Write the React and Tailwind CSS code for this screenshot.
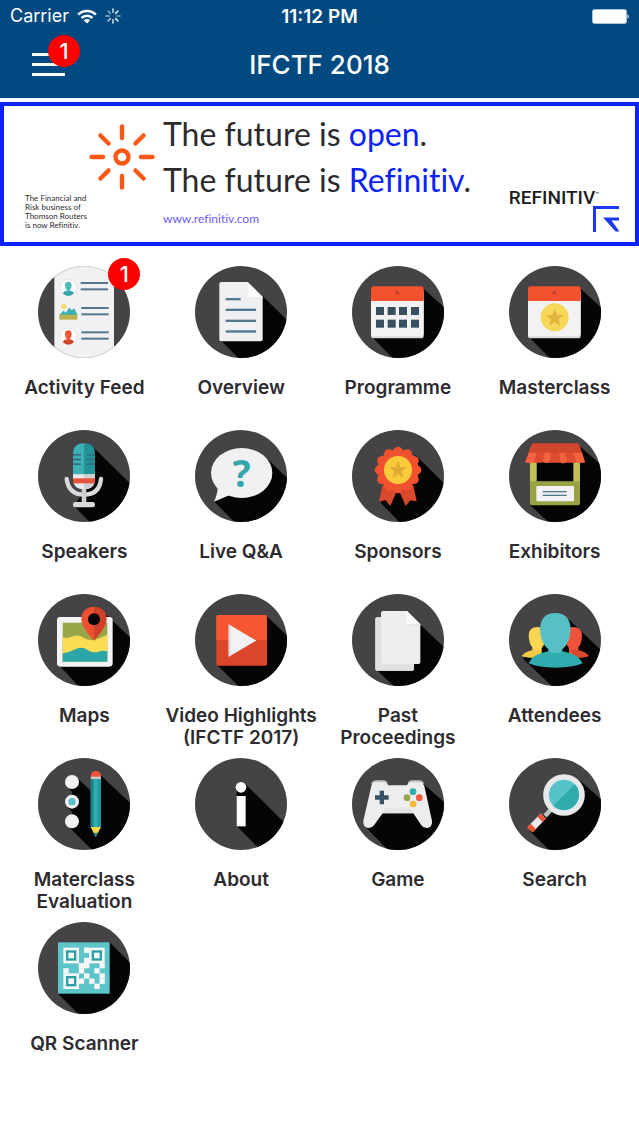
import React from 'react';

const STAR = 'M0 -28 L7 -9 L27 -9 L11 4 L17 24 L0 12 L-17 24 L-11 4 L-27 -9 L-7 -9 Z';

// Dark disc with a long shadow that falls to the bottom right
function Disc({ shadow, children }) {
  return (
    <svg viewBox="0 0 276 276" className="size-[92px] rounded-full bg-[#454346]" aria-hidden="true">
      {shadow && <polygon points={shadow} fill="#050505" />}
      {children}
    </svg>
  );
}

function Avatar({ x, y, light, dark }) {
  return (
    <g transform={`translate(${x} ${y})`}>
      <circle r="25" fill="#fff" stroke="#dcdcdf" strokeWidth="2" />
      <path d="M-17 17 Q-14 10 -4 9 H4 Q14 10 17 17 Q9 25 0 25 Q-9 25 -17 17 Z" fill={dark} />
      <path d="M-10 -8 Q-9 -18 0 -18 Q9 -18 10 -8 Q10 2 5 7 V12 Q0 16 -5 12 V7 Q-10 2 -10 -8 Z" fill={light} />
    </g>
  );
}

function ActivityIcon() {
  return (
    <Disc>
      <path d="M49 0 H228 V276 H49 Z" fill="#f1f1f3" />
      <path d="M49 33 A138 138 0 0 1 228 33 M49 243 A138 138 0 0 0 228 243" fill="none" stroke="#d6d6d9" strokeWidth="4" />
      <Avatar x={91} y={65} light="#4bbcc0" dark="#2fa3a6" />
      <Avatar x={91} y={211} light="#f0563a" dark="#cf4429" />
      <circle cx="78" cy="121" r="8" fill="#f8dc6a" />
      <path d="M65 146 L76 134 L84 140 L93 125 L102 133 L108 126 L118 146 V150 H65 Z" fill="#36aeb2" />
      <rect x="64" y="146" width="54" height="15" fill="#bdb052" />
      <g fill="#51788f">
        <rect x="128" y="48" width="82" height="6" />
        <rect x="128" y="67" width="82" height="6" />
        <rect x="130" y="123" width="82" height="6" />
        <rect x="130" y="142" width="82" height="6" />
        <rect x="130" y="196" width="82" height="6" />
        <rect x="130" y="215" width="82" height="6" />
      </g>
    </Disc>
  );
}

function OverviewIcon() {
  return (
    <Disc shadow="203,90 276,162 276,276 130,276 80,226">
      <path d="M79 48 H158 L203 93 V220 Q203 226 197 226 H79 Q73 226 73 220 V54 Q73 48 79 48 Z" fill="#f0f0f3" />
      <path d="M158 48 L203 93 V97 H158 Z" fill="#fbfbfc" />
      <path d="M158 97 H203" stroke="#dddde0" strokeWidth="2" />
      <g fill="#51788f">
        <rect x="92" y="96" width="45" height="7" />
        <rect x="92" y="128" width="91" height="7" />
        <rect x="92" y="161" width="91" height="7" />
        <rect x="92" y="193" width="91" height="7" />
      </g>
    </Disc>
  );
}

function CalendarIcon({ children }) {
  return (
    <Disc shadow="212,66 276,124 276,276 122,276 62,215">
      <rect x="57" y="70" width="158" height="147" rx="8" fill="#d9dadd" />
      <path d="M57 100 H215 V204 Q215 211 208 211 H64 Q57 211 57 204 Z" fill="#f2f2f5" />
      <path d="M57 105 V69 Q57 61 65 61 H207 Q215 61 215 69 V105 Z" fill="#f4512f" />
      <circle cx="136" cy="80" r="5" fill="#b8402a" />
      {children}
    </Disc>
  );
}

function ProgrammeIcon() {
  return (
    <CalendarIcon>
      {[72, 107, 141, 177].map(x => (
        <g key={x} fill="#36505f">
          <rect x={x} y="123" width="24" height="24" />
          <rect x={x} y="161" width="24" height="24" />
        </g>
      ))}
    </CalendarIcon>
  );
}

function MasterclassIcon() {
  return (
    <CalendarIcon>
      <circle cx="137" cy="154" r="42" fill="#f6d758" />
      <path d={STAR} transform="translate(137 156)" fill="#dfb540" />
    </CalendarIcon>
  );
}

function SpeakersIcon() {
  return (
    <Disc shadow="164,50 276,160 276,276 155,276 108,228 140,180">
      <path d="M105 73 Q105 40 138 40 V178 Q105 178 105 145 Z" fill="#3cb0b4" />
      <path d="M138 40 Q171 40 171 73 V145 Q171 178 138 178 Z" fill="#239296" />
      <path d="M105 133 H171 V145 Q171 178 138 178 Q105 178 105 145 Z" fill="#e9e9eb" />
      <path d="M138 133 H171 V145 Q171 178 138 178 Z" fill="#cfcfd2" />
      <rect x="105" y="145" width="66" height="15" fill="#e5543a" />
      <g fill="#336a86">
        <rect x="105" y="72" width="24" height="5" />
        <rect x="105" y="86" width="24" height="5" />
        <rect x="105" y="100" width="24" height="5" />
        <rect x="147" y="72" width="24" height="5" />
        <rect x="147" y="86" width="24" height="5" />
        <rect x="147" y="100" width="24" height="5" />
      </g>
      <path d="M86 147 C90 178 108 194 138 194 C168 194 186 178 189 147" fill="none" stroke="#dadadd" strokeWidth="13" strokeLinecap="round" />
      <rect x="131" y="176" width="14" height="44" fill="#cfcfd2" />
      <rect x="105" y="216" width="66" height="16" rx="7" fill="#dadadd" />
    </Disc>
  );
}

function QuestionIcon() {
  return (
    <Disc shadow="215,85 276,143 276,276 118,276 57,214">
      <ellipse cx="140" cy="129" rx="92" ry="75" fill="#f1f1f4" />
      <path d="M68 172 Q68 192 57 215 L106 194 Z" fill="#f1f1f4" />
      <text x="140" y="170" textAnchor="middle" fill="#32a8ac" className="font-['Noto_Sans',sans-serif] text-[114px] font-bold">?</text>
    </Disc>
  );
}

function SponsorsIcon() {
  return (
    <Disc shadow="190,75 276,160 276,276 142,276 86,218">
      <path d="M92 165 L81 214 L101 211 L115 228 L138 175 Z" fill="#d9472c" />
      <path d="M184 165 L194 214 L175 211 L161 228 L138 175 Z" fill="#d9472c" />
      <circle cx="138" cy="120" r="62" fill="#f0512f" />
      {Array.from({ length: 12 }, (_, i) => (
        <circle key={i} cx="138" cy="64" r="14" fill="#f0512f" transform={`rotate(${i * 30} 138 120)`} />
      ))}
      <circle cx="138" cy="120" r="42" fill="#fccb3c" />
      <path d={STAR} transform="translate(138 120)" fill="#deaa34" />
    </Disc>
  );
}

function ExhibitorsIcon() {
  return (
    <Disc shadow="211,48 276,104 276,276 118,276 63,225">
      <rect x="83" y="90" width="110" height="66" fill="#050505" />
      <rect x="63" y="90" width="20" height="66" fill="#c1bf55" />
      <rect x="193" y="90" width="20" height="66" fill="#c1bf55" />
      <path d="M63 154 H213 V220 Q213 226 207 226 H69 Q63 226 63 220 Z" fill="#9aa344" />
      <rect x="82" y="168" width="113" height="46" rx="4" fill="#f2f2f5" />
      <rect x="101" y="183" width="72" height="4" fill="#51788f" />
      <rect x="101" y="194" width="72" height="4" fill="#51788f" />
      <path d="M74 40 H204 Q211 40 212 47 L228 97 Q214 102 202 96 H74 Q62 102 48 97 L66 47 Q68 40 74 40 Z" fill="#d3452c" />
      <path d="M60 68 H84 L76 96 Q62 102 48 97 Z M108 68 H126 L122 98 Q111 101 100 96 Z M150 68 H168 L176 97 Q164 102 154 98 Z M192 68 H219 L228 97 Q214 102 202 96 Z" fill="#f4623f" />
      <path d="M74 98 L84 68 H108 L100 98 Z M122 98 L126 68 H150 L154 98 Z M176 98 L168 68 H192 L202 98 Z" fill="#df4c31" />
    </Disc>
  );
}

function MapsIcon() {
  return (
    <Disc shadow="205,62 276,130 276,276 122,276 64,215">
      <rect x="57" y="69" width="167" height="149" rx="10" fill="#f3f3f5" />
      <rect x="74" y="86" width="134" height="117" fill="#98a548" />
      <path d="M74 130 Q90 135 106 126 Q122 122 138 132 Q152 140 168 138 Q188 132 208 122 V203 H74 Z" fill="#fbdc54" />
      <path d="M74 178 Q94 176 112 166 Q126 158 142 164 Q162 178 180 174 Q194 168 208 172 V203 H74 Z" fill="#2ba5a8" />
      <path d="M168 38 Q130 40 130 78 Q132 102 168 140 Z" fill="#ee4f31" />
      <path d="M168 38 Q206 40 206 78 Q204 102 168 140 Z" fill="#cf4229" />
      <circle cx="168" cy="76" r="18" fill="#050505" />
    </Disc>
  );
}

function VideoIcon() {
  return (
    <Disc shadow="214,66 276,124 276,276 130,276 66,213">
      <rect x="64" y="63" width="152" height="152" rx="5" fill="#dc472b" />
      <path d="M64 139 V68 Q64 63 69 63 H211 Q216 63 216 68 V139 Z" fill="#f65632" />
      <path d="M101 91 L184 140 L101 188 Z" fill="#f2f2f4" />
      <path d="M101 91 L107 95 V184 L101 188 Z" fill="#ddd" />
    </Disc>
  );
}

function PastIcon() {
  return (
    <Disc shadow="203,90 276,160 276,276 125,276 74,228">
      <rect x="70" y="70" width="116" height="160" rx="6" fill="#dcdcdf" />
      <path d="M70 76 Q70 70 76 70 H87 V210 H186 V224 Q186 230 180 230 H76 Q70 230 70 224 Z" fill="#e1e1e4" />
      <path d="M93 51 H165 L205 91 V204 Q205 210 199 210 H93 Q87 210 87 204 V57 Q87 51 93 51 Z" fill="#eeeef1" />
      <path d="M165 51 L205 91 V93 H163 V51 Z" fill="#fafafb" />
      <path d="M163 93 H205" stroke="#dadade" strokeWidth="3" />
    </Disc>
  );
}

function AttendeesIcon() {
  return (
    <Disc shadow="178,75 276,168 276,276 128,276 42,194 90,150">
      <path d="M59 124 Q60 99 86 99 Q108 99 110 128 Q108 152 98 162 V190 H54 Q44 188 39 186 Q46 176 70 169 V160 Q60 150 59 124 Z" fill="#f9d654" />
      <path d="M39 186 Q46 174 72 168 H98 L80 192 Q56 192 39 186 Z" fill="#f3c945" />
      <path d="M219 124 Q218 99 192 99 Q170 99 168 128 Q170 152 180 162 V190 H224 Q234 188 239 186 Q232 176 208 169 V160 Q218 150 219 124 Z" fill="#f0533a" />
      <path d="M239 186 Q232 174 206 168 H184 L198 192 Q222 192 239 186 Z" fill="#dc4730" />
      <path d="M59 208 Q70 180 118 172 H160 Q208 180 221 208 Q190 221 140 221 Q90 221 59 208 Z" fill="#30acb0" />
      <path d="M93 105 Q95 57 139 57 Q183 57 185 105 Q183 148 160 166 V172 Q139 184 118 172 V166 Q95 148 93 105 Z" fill="#56c0c6" />
    </Disc>
  );
}

function EvaluationIcon() {
  return (
    <Disc shadow="118,60 158,98 158,45 184,48 276,134 276,276 162,276 90,204 102,190 102,162 88,146 102,130 102,102 90,88">
      <circle cx="102" cy="72" r="21" fill="#f3f3f5" />
      <circle cx="102" cy="131" r="21" fill="#f3f3f5" />
      <circle cx="102" cy="190" r="21" fill="#f3f3f5" />
      <circle cx="102" cy="131" r="11" fill="#54c2c8" />
      <path d="M158 58 V52 Q160 39 173 39 Q187 39 189 52 V58 Z" fill="#f0533a" />
      <rect x="158" y="56" width="31" height="9" fill="#c9cbcc" />
      <rect x="158" y="64" width="31" height="144" fill="#229a9c" />
      <rect x="158" y="64" width="9" height="144" fill="#188486" />
      <rect x="167" y="64" width="12" height="144" fill="#35adaf" />
      <path d="M158 207 H189 L173 237 Z" fill="#f5d94e" />
      <path d="M166 224 H180 L173 237 Z" fill="#1d8f91" />
    </Disc>
  );
}

function AboutIcon() {
  return (
    <Disc shadow="148,75 276,202 276,276 196,276 125,204 125,98">
      <circle cx="138" cy="88" r="16" fill="#fff" />
      <rect x="125" y="114" width="27" height="91" fill="#fff" />
    </Disc>
  );
}

function GameIcon() {
  return (
    <Disc shadow="210,74 276,132 276,276 108,276 40,206">
      <path d="M58 78 Q60 67 74 67 H96 Q106 68 107 80 Z M167 80 Q168 68 178 67 H200 Q214 68 216 78 Z" fill="#c4c4c7" />
      <path d="M58 84 Q60 73 74 73 H96 Q105 74 109 82 H165 Q169 74 178 73 H200 Q213 74 217 84 L240 188 Q242 206 226 210 Q214 211 208 202 L184 166 H92 L66 202 Q60 211 48 210 Q32 206 34 188 Z" fill="#ededf0" />
      <path d="M92 166 H184 L174 152 H102 Z" fill="#e2e2e5" />
      <path d="M83 98 H96 V112 H110 V125 H96 V139 H83 V125 H69 V112 H83 Z" fill="#365263" />
      <circle cx="183" cy="101" r="10" fill="#35adaf" />
      <circle cx="165" cy="119" r="10" fill="#99a548" />
      <circle cx="202" cy="119" r="10" fill="#f0593c" />
      <circle cx="183" cy="138" r="10" fill="#f6b93c" />
    </Disc>
  );
}

function SearchIcon() {
  return (
    <Disc shadow="210,65 276,124 276,276 120,276 62,218 120,150">
      <path d="M134 146 L108 174" stroke="#bfc1c3" strokeWidth="14" />
      <path d="M103 174 L64 214" stroke="#e9e9ec" strokeWidth="22" />
      <path d="M103 174 L93 184 M73 205 L62 216" stroke="#ec5335" strokeWidth="22" />
      <circle cx="165" cy="111" r="54" fill="#57c3c8" stroke="#e8e8ea" strokeWidth="17" />
      <path d="M132.500 143.500 A46 46 0 0 0 197.500 78.500 Z" fill="#2fabae" />
    </Disc>
  );
}

const QR_ROWS = [
  '....1...',
  '........',
  '....1...',
  '...11..1',
  '1..1..1.',
  '....1..1',
  '...1.1.1',
  '......1.',
];

function QrIcon() {
  return (
    <Disc shadow="215,61 276,122 276,276 121,276 60,215">
      <rect x="60" y="61" width="155" height="154" fill="#5dc5ca" />
      {QR_ROWS.map((row, r) =>
        row.split('').map((cell, c) =>
          cell === '1' ? <rect key={`${r}-${c}`} x={76 + c * 15.5} y={76.5 + r * 15.5} width="16" height="16" fill="#f5f7f7" /> : null
        )
      )}
      {[[76, 77], [153, 77], [76, 154]].map(([x, y]) => (
        <g key={`${x}-${y}`}>
          <rect x={x} y={y} width="47" height="47" fill="#f5f7f7" />
          <rect x={x + 8} y={y + 8} width="31" height="31" fill="#2b9fa2" />
          <rect x={x + 15} y={y + 15} width="17" height="17" fill="#f5f7f7" />
        </g>
      ))}
    </Disc>
  );
}

const tiles = [
  { label: 'Activity Feed', Icon: ActivityIcon, badge: 1 },
  { label: 'Overview', Icon: OverviewIcon },
  { label: 'Programme', Icon: ProgrammeIcon },
  { label: 'Masterclass', Icon: MasterclassIcon },
  { label: 'Speakers', Icon: SpeakersIcon },
  { label: 'Live Q&A', Icon: QuestionIcon },
  { label: 'Sponsors', Icon: SponsorsIcon },
  { label: 'Exhibitors', Icon: ExhibitorsIcon },
  { label: 'Maps', Icon: MapsIcon },
  { label: 'Video Highlights (IFCTF 2017)', Icon: VideoIcon },
  { label: 'Past Proceedings', Icon: PastIcon },
  { label: 'Attendees', Icon: AttendeesIcon },
  { label: 'Materclass Evaluation', Icon: EvaluationIcon },
  { label: 'About', Icon: AboutIcon },
  { label: 'Game', Icon: GameIcon },
  { label: 'Search', Icon: SearchIcon },
  { label: 'QR Scanner', Icon: QrIcon },
];

function Badge({ count }) {
  return (
    <span className="flex size-8 items-center justify-center rounded-full bg-[#fe0000] text-[22px] leading-none font-medium text-white">
      {count}
    </span>
  );
}

function StatusBar() {
  return (
    <div className="grid h-8 grid-cols-3 items-center px-2.5">
      <div className="flex items-center gap-2">
        <span className="text-lg leading-none">Carrier</span>
        <svg viewBox="0 0 20 15" className="h-[15px] w-5" fill="none" stroke="white" aria-hidden="true">
          <path d="M1.200 5.600 A12.500 12.500 0 0 1 18.800 5.600" strokeWidth="2.600" />
          <path d="M4.600 9 A7.700 7.700 0 0 1 15.400 9" strokeWidth="2.600" />
          <path d="M10 14.500 L6.800 11.200 A4.600 4.600 0 0 1 13.200 11.200 Z" fill="white" stroke="none" />
        </svg>
        <svg viewBox="-8 -8 16 16" className="size-4" stroke="white" strokeWidth="1.600" strokeLinecap="round" aria-hidden="true">
          {[0.8, 0.9, 0.5, 0.9, 0.8, 0.7, 0.6, 0.5].map((opacity, i) => (
            <path key={i} d="M0 -3.800 V-7" opacity={opacity} transform={`rotate(${i * 45})`} />
          ))}
        </svg>
      </div>
      <span className="text-center text-[19px] leading-none font-semibold">11:12 PM</span>
      <svg viewBox="0 0 38 15" className="h-[15px] w-[38px] justify-self-end" aria-hidden="true">
        <rect x="1.500" y="0.500" width="34" height="14" rx="2" fill="white" stroke="#a9c1d6" />
        <path d="M36.500 5 Q39 7.500 36.500 10 Z" fill="white" />
      </svg>
    </div>
  );
}

function Header() {
  return (
    <header className="bg-[#014981] text-white">
      <StatusBar />
      <div className="grid h-[66px] grid-cols-[1fr_auto_1fr] items-center px-8">
        <button aria-label="Menu" className="relative flex w-[33px] flex-col gap-[7px] justify-self-start pb-0.5">
          <span className="h-[3px] bg-white" />
          <span className="h-[3px] bg-white" />
          <span className="h-[3px] bg-white" />
          <span className="absolute -top-[18px] left-4">
            <Badge count={1} />
          </span>
        </button>
        <h1 className="text-[26px] leading-none font-medium">IFCTF 2018</h1>
      </div>
    </header>
  );
}

function Banner() {
  return (
    <section className="mt-1 flex h-36 border-4 border-[#0b22fb] pr-4 pl-[21px] font-['Lato',sans-serif] text-[#2b2b2e] [font-variant-ligatures:none]">
      <p className="mb-3 w-16 self-end text-[8px] leading-[9px] whitespace-nowrap">
        The Financial and<br />Risk business of<br />Thomson Routers<br />is now Refinitiv.
      </p>
      <svg viewBox="-33 -33 66 66" className="mt-[18px] size-[66px] shrink-0" fill="none" stroke="#fb5816" strokeWidth="4.400" strokeLinecap="round" aria-hidden="true">
        <circle r="6.500" />
        {[0, 45, 90, 135, 180, 225, 270, 315].map(angle => (
          <path key={angle} d="M0 -19 V-30.500" transform={`rotate(${angle})`} />
        ))}
      </svg>
      <div className="ml-2 pt-[5px] whitespace-nowrap">
        <p className="text-[32px] leading-[46px]">The future is <span className="text-[#0b22fb]">open</span>.</p>
        <p className="text-[32px] leading-[46px]">The future is <span className="text-[#0b22fb]">Refinitiv</span>.</p>
        <a href="#" className="mt-2 block text-xs leading-4 text-[#6a5cf5]">www.refinitiv.com</a>
      </div>
      <div className="mb-2.5 ml-auto flex flex-col self-end">
        <span className="mr-5 flex font-['Roboto',sans-serif] text-[19px] leading-4 font-medium text-[#1c1c20]">
          REFINITIV<span className="text-[6px] leading-2">™</span>
        </span>
        <svg viewBox="0 0 26 26" className="size-[26px] self-end" fill="#1d38f5" aria-hidden="true">
          <path d="M0 0 H26 V3 H3 V26 H0 Z" />
          <path d="M10 11.500 H26 V14.500 H18.500 L26.500 25.500 H22.500 Z" />
        </svg>
      </div>
    </section>
  );
}

function Tile({ label, Icon, badge }) {
  return (
    <a href="#" className="flex flex-col items-center">
      <span className="relative">
        <Icon />
        {badge && (
          <span className="absolute -top-2 -right-2.5">
            <Badge count={badge} />
          </span>
        )}
      </span>
      <span className="mt-[19px] max-w-[154px] text-center text-[19px] leading-[22px] font-semibold">{label}</span>
    </a>
  );
}

function App() {
  return (
    <div className="min-h-screen bg-white font-['Inter',sans-serif] text-[#2d2b30]">
      <Header />
      <Banner />
      <nav className="grid auto-rows-[164px] grid-cols-4 px-1.5 pt-5">
        {tiles.map(tile => (
          <Tile key={tile.label} {...tile} />
        ))}
      </nav>
    </div>
  );
}

export default App;
